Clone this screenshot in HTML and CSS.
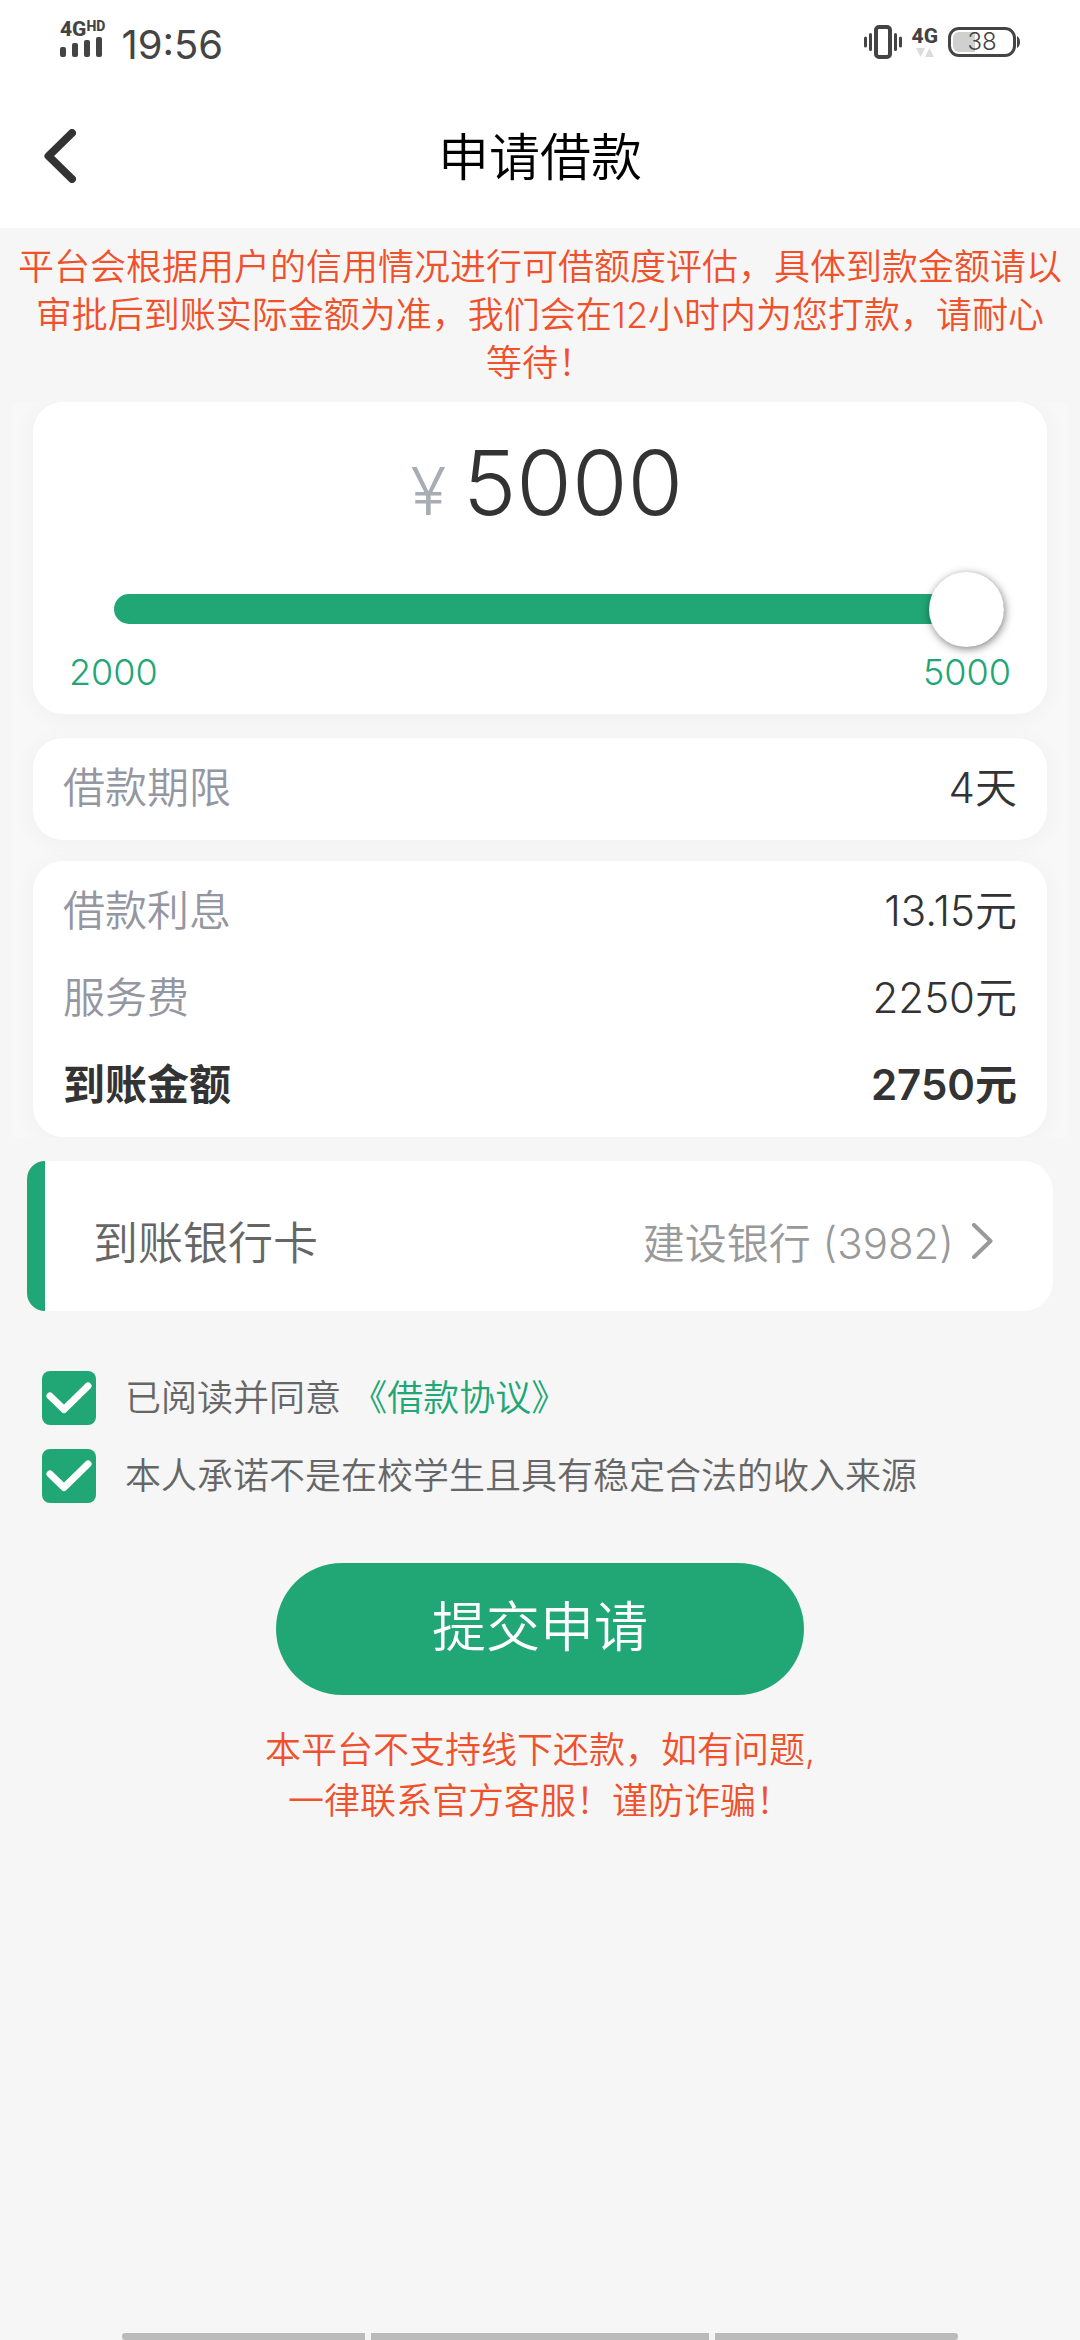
FILE: index.html
```html
<!DOCTYPE html>
<html lang="zh-CN">
<head>
<meta charset="utf-8">
<meta name="viewport" content="width=device-width, initial-scale=1">
<title>申请借款</title>
<link rel="stylesheet" href="styles.css">
</head>
<body>
<div class="page">
  <header class="top">
    <div class="status">
      <div class="status-side">
        <div class="signal">
          <div class="net"><span class="net-type">4G</span><span class="net-hd">HD</span></div>
          <svg width="42" height="20" viewBox="0 0 42 20" fill="#444" aria-hidden="true">
            <rect x="0" y="10" width="6" height="10" rx="2"/>
            <rect x="12" y="6" width="6" height="14" rx="2"/>
            <rect x="24" y="3" width="6" height="17" rx="2"/>
            <rect x="36" y="0" width="6" height="20" rx="2"/>
          </svg>
        </div>
        <span class="clock">19:56</span>
      </div>
      <div class="status-side status-right">
        <svg width="38" height="34" viewBox="0 0 38 34" aria-hidden="true">
          <rect x="12" y="2" width="14" height="30" rx="3" fill="none" stroke="#444" stroke-width="4"/>
          <g stroke="#444" stroke-width="3" stroke-linecap="round">
            <path d="M1.500 13v8M6.500 9.500v15M31.500 9.500v15M36.500 13v8"/>
          </g>
        </svg>
        <div class="data">
          <span class="net-type">4G</span>
          <svg width="18" height="9" viewBox="0 0 18 9" fill="#dcdcdc" aria-hidden="true">
            <path d="M0 0h9L4.500 9zM9 9h9L13.500 0z"/>
          </svg>
        </div>
        <div class="battery">
          <span class="battery-body"><span class="battery-level">38</span></span>
          <svg width="4" height="14" viewBox="0 0 4 14" aria-hidden="true"><path d="M1 1q3 2 3 6t-3 6z" fill="#444"/></svg>
        </div>
      </div>
    </div>
    <nav class="bar">
      <button class="back" type="button" aria-label="返回">
        <svg width="32" height="54" viewBox="0 0 32 54" aria-hidden="true">
          <path d="M28 4L4.500 27L28 50" fill="none" stroke="#333" stroke-width="8" stroke-linecap="round" stroke-linejoin="round"/>
        </svg>
      </button>
      <h1 class="title">申请借款</h1>
    </nav>
  </header>

  <main>
    <p class="notice">平台会根据用户的信用情况进行可借额度评估，具体到款金额请以审批后到账实际金额为准，我们会在12小时内为您打款，请耐心等待！</p>

    <form class="form">
      <div class="cards">
        <section class="card card-amount">
          <div class="amount"><span class="yen">¥</span><output class="sum" for="amount">5000</output></div>
          <div class="slider-row">
            <input class="slider" id="amount" type="range" min="2000" max="5000" value="5000" aria-label="借款金额">
          </div>
          <div class="limits"><span>2000</span><span>5000</span></div>
        </section>
        <dl class="card card-term">
          <div class="row"><dt>借款期限</dt><dd>4天</dd></div>
        </dl>
        <dl class="card">
          <div class="row"><dt>借款利息</dt><dd>13.15元</dd></div>
          <div class="row"><dt>服务费</dt><dd>2250元</dd></div>
          <div class="row total"><dt>到账金额</dt><dd>2750元</dd></div>
        </dl>
      </div>

      <button class="bank" type="button">
        <span class="bank-label">到账银行卡</span>
        <span class="bank-value">建设银行 (3982)</span>
        <svg width="21" height="36" viewBox="0 0 21 36" aria-hidden="true">
          <path d="M2 2L18.500 18L2 34" fill="none" stroke="#999" stroke-width="4" stroke-linecap="round" stroke-linejoin="round"/>
        </svg>
      </button>

      <div class="agree">
        <div class="check">
          <span class="box">
            <input id="terms" type="checkbox" checked>
            <svg viewBox="0 0 54 54" aria-hidden="true"><path d="M8 25L22 38.500L46 15"/></svg>
          </span>
          <label for="terms">已阅读并同意 <a href="#terms">《借款协议》</a></label>
        </div>
        <div class="check">
          <span class="box">
            <input id="promise" type="checkbox" checked>
            <svg viewBox="0 0 54 54" aria-hidden="true"><path d="M8 25L22 38.500L46 15"/></svg>
          </span>
          <label for="promise">本人承诺不是在校学生且具有稳定合法的收入来源</label>
        </div>
      </div>

      <button class="submit" type="submit">提交申请</button>
    </form>

    <p class="warning">本平台不支持线下还款，如有问题,<br>一律联系官方客服！谨防诈骗！</p>
  </main>

  <div class="gesture" aria-hidden="true"><span></span><span></span><span></span></div>
</div>
</body>
</html>
```

FILE: styles.css
```css
* {
  box-sizing: border-box;
}

body {
  margin: 0;
  background: #f6f6f6;
  color: #333;
  font-family: Inter, "Noto Sans CJK SC", sans-serif;
  font-size: 36px;
  font-weight: 350;
}

h1, p, dl, dd {
  margin: 0;
}

button {
  border: 0;
  padding: 0;
  background: none;
  color: inherit;
  font: inherit;
}

svg {
  display: block;
}

.page {
  display: flex;
  flex-direction: column;
  min-height: 100vh;
}

.top {
  background: #fff;
}

/* status bar */
.status {
  display: flex;
  justify-content: space-between;
  height: 84px;
  padding: 0 60px;
  color: #444;
}

.status-side {
  display: flex;
  align-items: center;
  gap: 16px;
}

.status-right {
  gap: 10px;
}

.signal {
  display: flex;
  flex-direction: column;
  padding-bottom: 6px;
}

.net {
  display: flex;
  align-items: flex-start;
  height: 16px;
}

.net-type {
  font: 800 21px/16px Roboto, sans-serif;
}

.net-hd {
  font: 800 14px/11px Roboto, sans-serif;
}

.clock {
  padding-top: 5px;
  font-size: 40px;
  line-height: 48px;
  font-weight: 400;
}

.data {
  display: flex;
  flex-direction: column;
  align-items: center;
  gap: 4px;
}

.battery {
  display: flex;
  align-items: center;
}

.battery-body {
  width: 68px;
  height: 30px;
  padding: 2px;
  border: 3px solid #444;
  border-radius: 11px;
}

.battery-level {
  display: block;
  border-radius: 6px;
  background: linear-gradient(90deg, #d0d0d0 38%, transparent 38%);
  font-size: 24px;
  line-height: 20px;
  text-align: center;
}

/* title bar */
.bar {
  display: grid;
  grid-template-columns: 120px 1fr 120px;
  align-items: center;
  height: 144px;
}

.back {
  justify-self: start;
  padding: 12px 44px;
}

.title {
  padding-top: 4px;
  color: #000;
  font-size: 51px;
  line-height: 72px;
  font-weight: 350;
  text-align: center;
}

.notice {
  padding: 15px 18px;
  color: #f0502a;
  line-height: 48px;
  text-align: center;
}

/* loan cards */
.cards {
  margin: 0 12px;
  padding: 0 21px;
  overflow: hidden;
  background: #f8f8f8;
}

.card {
  padding: 6px 30px 9px;
  border-radius: 30px;
  background: #fff;
  box-shadow: 0 3px 24px rgba(0, 0, 0, 0.04);
}

.card-amount {
  padding: 27px 36px 18px;
}

.card-term {
  margin: 24px 0 21px;
}

.amount {
  display: flex;
  justify-content: center;
  align-items: baseline;
  gap: 3px;
  line-height: 108px;
}

.yen {
  width: 63px;
  color: #a8adb5;
  font-size: 66px;
  line-height: 66px;
  text-align: center;
}

.sum {
  font-size: 90px;
}

.slider-row {
  display: flex;
  margin-top: 34px;
  padding: 0 7px 0 45px;
}

.slider {
  flex: 1;
  height: 75px;
  margin: 0;
  background: none;
  appearance: none;
}

.slider::-webkit-slider-runnable-track {
  height: 30px;
  border-radius: 15px;
  background: #21a675;
}

.slider::-webkit-slider-thumb {
  width: 75px;
  height: 75px;
  margin-top: -22px;
  border-radius: 50%;
  background: #fff;
  box-shadow: 1px 2px 9px rgba(0, 0, 0, 0.5);
  appearance: none;
}

.limits {
  display: flex;
  justify-content: space-between;
  margin-top: 2px;
  color: #21a675;
  line-height: 48px;
}

.row {
  display: flex;
  justify-content: space-between;
  padding: 12px 0;
  font-size: 42px;
  line-height: 63px;
}

.row dt {
  color: #9496a2;
}

.total,
.total dt {
  color: #333;
  font-weight: 600;
}

/* receiving bank card */
.bank {
  display: flex;
  align-items: center;
  width: calc(100% - 54px);
  min-height: 150px;
  margin: 24px 27px 0;
  padding: 9px 60px 0 48px;
  border-left: 18px solid #21a675;
  border-radius: 18px 30px 30px 18px;
  background: #fff;
  text-align: left;
}

.bank-label {
  flex: 1;
  color: #666;
  font-size: 45px;
}

.bank-value {
  margin-right: 18px;
  color: #999;
  font-size: 42px;
}

/* agreements */
.agree {
  display: flex;
  flex-direction: column;
  gap: 24px;
  margin: 60px 42px;
}

.check {
  display: flex;
  align-items: center;
  gap: 29px;
  color: #666;
  line-height: 54px;
}

.box {
  display: grid;
  flex: none;
  width: 54px;
  height: 54px;
}

.box > * {
  grid-area: 1 / 1;
}

.box input {
  width: 100%;
  height: 100%;
  margin: 0;
  border-radius: 8px;
  background: #ddd;
  appearance: none;
}

.box input:checked {
  background: #21a675;
}

.box svg {
  fill: none;
  stroke: #fff;
  stroke-width: 7px;
  stroke-linecap: round;
  stroke-linejoin: round;
  pointer-events: none;
}

.check a {
  color: #21a675;
  text-decoration: none;
}

.submit {
  display: block;
  width: 528px;
  max-width: 90%;
  height: 132px;
  margin: 0 auto;
  padding-bottom: 12px;
  border-radius: 66px;
  background: #21a675;
  color: #fff;
  font-size: 54px;
}

.warning {
  padding: 30px 18px;
  color: #f0502a;
  line-height: 51px;
  text-align: center;
}

/* system gesture bar */
.gesture {
  display: grid;
  grid-template-columns: 243fr 338fr 243fr;
  gap: 6px;
  height: 7px;
  margin: auto 122px 0;
}

.gesture span {
  background: #bbb;
}

.gesture span:first-child {
  border-radius: 3px 0 0 3px;
}

.gesture span:last-child {
  border-radius: 0 3px 3px 0;
}
```
